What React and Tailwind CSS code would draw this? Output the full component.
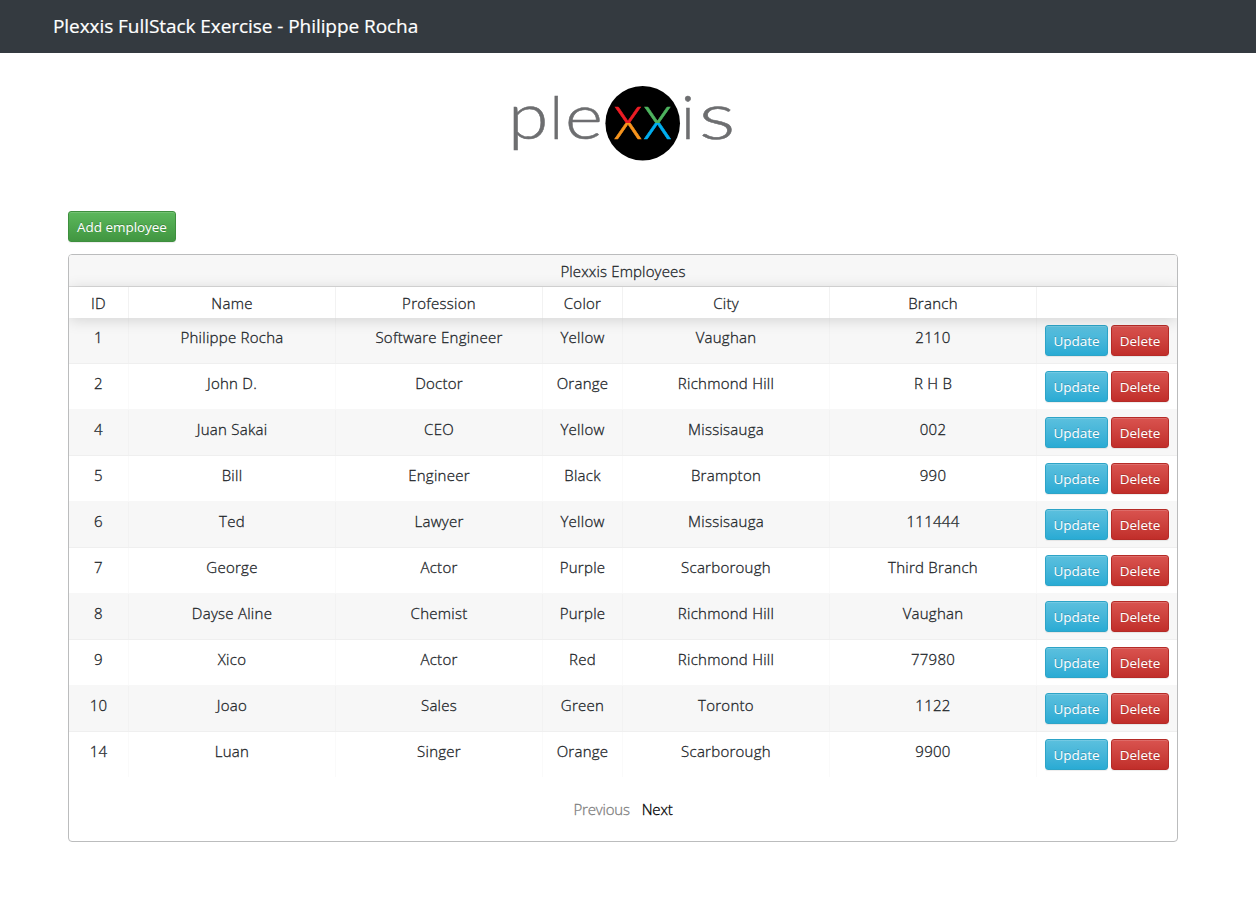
const employees = [
  [1, "Philippe Rocha", "Software Engineer", "Yellow", "Vaughan", "2110"],
  [2, "John D.", "Doctor", "Orange", "Richmond Hill", "R H B"],
  [4, "Juan Sakai", "CEO", "Yellow", "Missisauga", "002"],
  [5, "Bill", "Engineer", "Black", "Brampton", "990"],
  [6, "Ted", "Lawyer", "Yellow", "Missisauga", "111444"],
  [7, "George", "Actor", "Purple", "Scarborough", "Third Branch"],
  [8, "Dayse Aline", "Chemist", "Purple", "Richmond Hill", "Vaughan"],
  [9, "Xico", "Actor", "Red", "Richmond Hill", "77980"],
  [10, "Joao", "Sales", "Green", "Toronto", "1122"],
  [14, "Luan", "Singer", "Orange", "Scarborough", "9900"],
];

const headings = ["ID", "Name", "Profession", "Color", "City", "Branch"];
const columns = "grid grid-cols-[60px_207px_207px_80px_207px_207px_140px]";

function Logo() {
  return (
    <svg className="h-[95px] w-[250px]" viewBox="0 0 250 95" fontFamily="Lato, sans-serif" fontWeight="300" fontSize="62.5" fill="#6d6e70" stroke="#6d6e70" strokeWidth="0.5" textAnchor="middle">
      <defs>
        <linearGradient id="warm" gradientUnits="userSpaceOnUse" x1="0" y1="32" x2="0" y2="64">
          <stop offset="0.5" stopColor="#ed1c24" />
          <stop offset="0.5" stopColor="#f7941d" />
        </linearGradient>
        <linearGradient id="cool" gradientUnits="userSpaceOnUse" x1="0" y1="32" x2="0" y2="64">
          <stop offset="0.5" stopColor="#4db35e" />
          <stop offset="0.5" stopColor="#00aeef" />
        </linearGradient>
      </defs>
      <text transform="translate(28.2 64) scale(1.17 1)">p</text>
      <text x="56.3" y="64" fontSize="59">l</text>
      <text transform="translate(84 64) scale(1.16 1)">e</text>
      <circle cx="142.7" cy="48.2" r="37.3" fill="#000" stroke="none" />
      <text x="128" y="64" fill="url(#warm)" stroke="url(#warm)">x</text>
      <text x="157.5" y="64" fill="url(#cool)" stroke="url(#cool)">x</text>
      <text x="188" y="64" fontSize="62">i</text>
      <text transform="translate(217 64) scale(1.38 1)">s</text>
    </svg>
  );
}

function Button({ children, className }) {
  return (
    <button className={`flex h-[31px] items-center justify-center rounded-[3px] border pt-px text-[13.5px] leading-[21px] font-normal tracking-[-0.05px] text-white shadow-[inset_0_1px_0_rgba(255,255,255,0.15),0_1px_1px_rgba(0,0,0,0.075)] [-webkit-text-stroke:0] [text-shadow:0_-1px_0_rgba(0,0,0,0.2)] ${className}`}>
      {children}
    </button>
  );
}

function Row({ data, index, last }) {
  return (
    <div className={`${columns} ${last ? "h-[45px]" : "h-[46px] border-b border-b-black/[0.03]"} ${index % 2 === 0 ? "bg-black/[0.03]" : ""}`}>
      {data.map((value, i) => (
        <div key={i} className="border-r border-black/[0.02] pt-[7px] text-center">{value}</div>
      ))}
      <div className="flex gap-[3px] pt-[7px] pl-2">
        <Button className="w-[63px] border-[#2da4c7] bg-linear-to-b from-[#5bc0de] to-[#29abd4]">Update</Button>
        <Button className="w-[58px] border-[#b52b27] bg-linear-to-b from-[#d9534f] to-[#c12e2a]">Delete</Button>
      </div>
    </div>
  );
}

export default function App() {
  return (
    <div className="min-h-[912px] bg-white font-['Open_Sans','Noto_Sans',sans-serif] text-[15px] leading-6 text-[#212529]">
      <nav className="flex h-[53px] items-center bg-[#343a40] pb-[2px] pl-[53px]">
        <span className="text-[19px] tracking-[-0.06px] text-white [-webkit-text-stroke:0.2px_white]">Plexxis FullStack Exercise - Philippe Rocha</span>
      </nav>
      <main className="px-[68px]">
        <div className="flex h-[158px] justify-center pt-[22px] pr-[6px]"><Logo /></div>
        <Button className="w-[108px] border-[#3e8f3e] bg-linear-to-b from-[#5cb85c] to-[#419641]">Add employee</Button>
        <section className="mt-3 h-[588px] w-[1110px] rounded-[4px] border border-[#bbbcbd] font-light tracking-[0.26px] [-webkit-text-stroke:0.3px_currentColor]">
          <h1 className="h-8 rounded-t-[3px] border-b border-[#dcdcdc] bg-[#f7f7f7] pt-1 text-center font-light tracking-[0.15px]">Plexxis Employees</h1>
          <div className={`${columns} relative h-[31px] bg-white shadow-[0_2px_15px_rgba(0,0,0,0.15)] [clip-path:inset(-31px_0_-30px_0)]`}>
            {headings.map((heading) => (
              <div key={heading} className="border-r border-black/5 pt-1 text-center">{heading}</div>
            ))}
          </div>
          {employees.map((employee, i) => (
            <Row key={employee[0]} data={employee} index={i} last={i === employees.length - 1} />
          ))}
          <div className="mt-5 flex h-6 justify-center gap-3 tracking-[-0.2px]">
            <button className="text-[#808080]">Previous</button>
            <button className="text-black">Next</button>
          </div>
        </section>
      </main>
    </div>
  );
}
